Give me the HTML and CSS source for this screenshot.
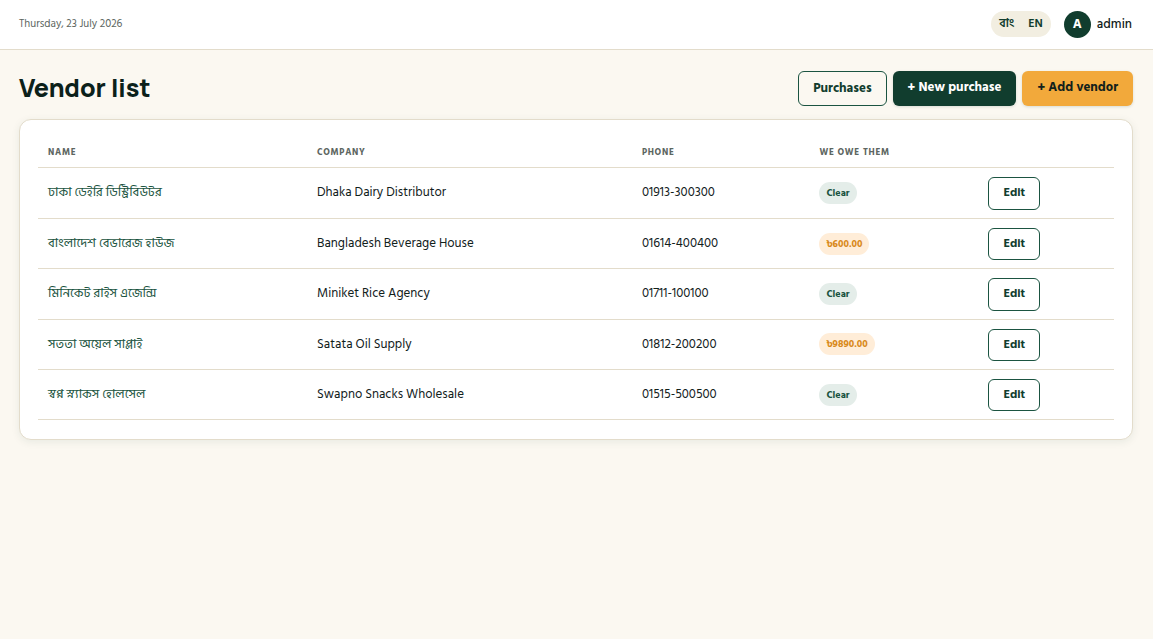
FILE: index.html
```html
<!DOCTYPE html>
<html lang="en">
<head>
  <meta charset="UTF-8">
  <meta name="viewport" content="width=device-width, initial-scale=1.0">
  <title>Vendor list</title>
  <link rel="stylesheet" href="styles.css">
</head>
<body>

  <header class="topbar">
    <span class="date">Thursday, 23 July 2026</span>
    <div class="topbar-right">
      <div class="lang-switch">
        <a href="#" lang="bn">বাং</a>
        <a href="#">EN</a>
      </div>
      <div class="user">
        <span class="avatar">A</span>
        <span class="user-name">admin</span>
      </div>
    </div>
  </header>

  <main class="content">
    <div class="page-head">
      <h1>Vendor list</h1>
      <div class="actions">
        <a href="#" class="btn btn-outline">Purchases</a>
        <a href="#" class="btn btn-primary">+ New purchase</a>
        <a href="#" class="btn btn-accent">+ Add vendor</a>
      </div>
    </div>

    <div class="card">
      <table class="vendors">
        <colgroup>
          <col class="col-name">
          <col class="col-company">
          <col class="col-phone">
          <col class="col-owe">
          <col>
        </colgroup>
        <thead>
          <tr>
            <th>Name</th>
            <th>Company</th>
            <th>Phone</th>
            <th>We owe them</th>
            <th></th>
          </tr>
        </thead>
        <tbody>
          <tr>
            <td><a href="#" lang="bn">ঢাকা ডেইরি ডিস্ট্রিবিউটর</a></td>
            <td>Dhaka Dairy Distributor</td>
            <td>01913-300300</td>
            <td><span class="badge badge-clear">Clear</span></td>
            <td><a href="#" class="btn btn-outline btn-sm">Edit</a></td>
          </tr>
          <tr>
            <td><a href="#" lang="bn">বাংলাদেশ বেভারেজ হাউজ</a></td>
            <td>Bangladesh Beverage House</td>
            <td>01614-400400</td>
            <td><span class="badge badge-due">৳600.00</span></td>
            <td><a href="#" class="btn btn-outline btn-sm">Edit</a></td>
          </tr>
          <tr>
            <td><a href="#" lang="bn">মিনিকেট রাইস এজেন্সি</a></td>
            <td>Miniket Rice Agency</td>
            <td>01711-100100</td>
            <td><span class="badge badge-clear">Clear</span></td>
            <td><a href="#" class="btn btn-outline btn-sm">Edit</a></td>
          </tr>
          <tr>
            <td><a href="#" lang="bn">সততা অয়েল সাপ্লাই</a></td>
            <td>Satata Oil Supply</td>
            <td>01812-200200</td>
            <td><span class="badge badge-due">৳9890.00</span></td>
            <td><a href="#" class="btn btn-outline btn-sm">Edit</a></td>
          </tr>
          <tr>
            <td><a href="#" lang="bn">স্বপ্ন স্ন্যাকস হোলসেল</a></td>
            <td>Swapno Snacks Wholesale</td>
            <td>01515-500500</td>
            <td><span class="badge badge-clear">Clear</span></td>
            <td><a href="#" class="btn btn-outline btn-sm">Edit</a></td>
          </tr>
        </tbody>
      </table>
    </div>
  </main>

</body>
</html>
```
FILE: styles.css
```css
:root {
  --green: #113d2e;
  --green-mid: #1b5441;
  --amber: #f2a93b;
  --ink: #12211b;
  --muted: #5d6661;
  --line: #e3dccb;
  --cream: #fbf8f1;
}

* {
  box-sizing: border-box;
}

body {
  margin: 0;
  font-family: "Hind Siliguri", "Noto Sans", "Noto Sans Bengali", sans-serif;
  font-size: 13px;
  line-height: 1.7;
  background: var(--cream);
  color: var(--ink);
}

a {
  color: var(--green-mid);
  text-decoration: none;
}

.topbar {
  display: flex;
  justify-content: space-between;
  align-items: center;
  height: 50px;
  padding: 0 21px 1px 19px;
  background: #fff;
  border-bottom: 1px solid var(--line);
}

.date {
  font-size: 11px;
  color: var(--muted);
}

.topbar-right {
  display: flex;
  align-items: center;
  gap: 13px;
}

.lang-switch {
  display: flex;
  height: 26px;
  padding: 0 8px;
  gap: 14px;
  background: #f2eee1;
  border-radius: 13px;
}

.lang-switch a {
  font-size: 12px;
  font-weight: 600;
  line-height: 26px;
  color: var(--green);
}

.user {
  display: flex;
  align-items: center;
  gap: 6px;
  font-weight: 500;
}

.avatar {
  width: 27px;
  height: 27px;
  border-radius: 50%;
  background: var(--green);
  color: #fff;
  font-weight: 700;
  line-height: 27px;
  text-align: center;
}

.content {
  padding: 21px 20px 20px 19px;
}

.page-head {
  display: flex;
  justify-content: space-between;
  align-items: flex-start;
  margin-bottom: 13px;
}

h1 {
  margin: 0;
  font-family: Manrope, Inter, sans-serif;
  font-size: 25px;
  font-weight: 800;
  line-height: 33px;
  color: #0b211a;
}

.actions {
  display: flex;
  gap: 6px;
}

.btn {
  display: inline-block;
  padding: 6px 15px 8px;
  border-radius: 6px;
  font-weight: 700;
  line-height: 1.65;
  text-align: center;
}

.btn-outline {
  border: 1px solid var(--green-mid);
  color: var(--green);
  padding: 6px 14px;
}

.btn-primary {
  background: var(--green);
  color: #fff;
  box-shadow: 0 1px 3px rgba(18, 60, 46, 0.15);
}

.btn-accent {
  background: var(--amber);
  color: var(--ink);
  box-shadow: 0 1px 3px rgba(18, 60, 46, 0.15);
}

.btn-sm {
  padding: 5px 14px;
  font-size: 12px;
  line-height: 1.7;
}

.card {
  padding: 18px 18px 19px;
  background: #fff;
  border: 1px solid var(--line);
  border-radius: 12px;
  box-shadow: 0 2px 8px rgba(18, 60, 46, 0.08);
}

.vendors {
  width: 100%;
  table-layout: fixed;
  border-collapse: separate;
  border-spacing: 0;
}

.col-name { width: 25%; }
.col-company { width: 30.2%; }
.col-phone { width: 16.5%; }
.col-owe { width: 15.7%; }

.vendors th {
  height: 30px;
  padding: 0 10px;
  border-bottom: 1px solid var(--line);
  font-size: 9px;
  font-weight: 700;
  letter-spacing: 0.08em;
  text-align: left;
  text-transform: uppercase;
  color: var(--muted);
}

.vendors td {
  padding: 9px 10px 8px;
  border-bottom: 1px solid var(--line);
  vertical-align: baseline;
}

.badge {
  display: inline-block;
  padding: 0 7px;
  border-radius: 12px;
  font-size: 10px;
  font-weight: 700;
  line-height: 22px;
  vertical-align: middle;
}

.badge-clear {
  background: #e4ede9;
  color: var(--green-mid);
}

.badge-due {
  background: #ffedd8;
  color: #d98a1c;
}
```
